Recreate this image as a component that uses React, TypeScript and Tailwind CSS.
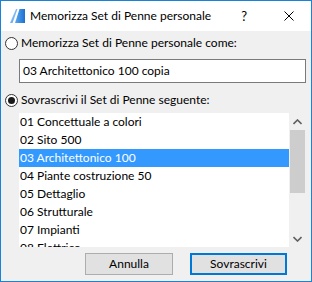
import React from 'react';

const items = [
  '01 Concettuale a colori',
  '02 Sito 500',
  '03 Architettonico 100',
  '04 Piante costruzione 50',
  '05 Dettaglio',
  '06 Strutturale',
  '07 Impianti',
  '08 Elettrico',
];

function Radio({ checked }: { checked?: boolean }) {
  return (
    <div className="flex h-[13px] w-[13px] items-center justify-center rounded-full border border-[#333333] bg-white">
      {checked && <div className="h-[7px] w-[7px] rounded-full bg-[#1a1a1a]" />}
    </div>
  );
}

function AppIcon() {
  return (
    <svg width="16" height="16" viewBox="0 0 16 16">
      <defs>
        <linearGradient id="ga" x1="0" y1="0" x2="1" y2="1">
          <stop offset="0" stopColor="#bfe0ff" />
          <stop offset="1" stopColor="#3d8ee6" />
        </linearGradient>
        <linearGradient id="gb" x1="0" y1="0" x2="1" y2="0">
          <stop offset="0" stopColor="#5aa8f0" />
          <stop offset="1" stopColor="#1c6fd0" />
        </linearGradient>
      </defs>
      <path d="M0 15 L6 1 L7.5 1 L2.5 15 Z" fill="url(#ga)" />
      <path d="M5 15 L9.5 1 L15 1 L15 15 Z" fill="url(#gb)" />
    </svg>
  );
}

export default function App() {
  return (
    <div
      className="flex h-[282px] w-[312px] flex-col border border-[#1883d7] bg-[#f0f0f0] text-[12px] text-black"
      style={{ fontFamily: 'Lato, "Liberation Sans", sans-serif' }}
    >
      <div className="flex h-[30px] items-center bg-white">
        <div className="ml-[9px] mr-[4px] flex">
          <AppIcon />
        </div>
        <span className="leading-none">Memorizza Set di Penne personale</span>
        <span className="ml-auto mr-[37px] text-[13px] leading-none">?</span>
        <svg className="mr-[17px]" width="10" height="10" viewBox="0 0 10 10">
          <path d="M0.5 0.5 L9.5 9.5 M9.5 0.5 L0.5 9.5" stroke="#000" strokeWidth="1" />
        </svg>
      </div>

      <div className="flex flex-1 flex-col">
        <div className="ml-[4px] mt-[5px] flex h-[14px] items-center gap-[3px]">
          <Radio />
          <span className="leading-none">Memorizza Set di Penne personale come:</span>
        </div>

        <div className="ml-[18px] mr-[5px] mt-[9px] flex h-[24px] items-center border border-[#7a7a7a] bg-white pl-[3px]">
          03 Architettonico 100 copia
        </div>

        <div className="ml-[4px] mt-[10px] flex h-[14px] items-center gap-[3px]">
          <Radio checked />
          <span className="leading-none">Sovrascrivi il Set di Penne seguente:</span>
        </div>

        <div className="ml-[18px] mr-[5px] mt-[6px] flex h-[134px]">
          <div className="flex-1 overflow-hidden bg-white">
            {items.map((it, i) => (
              <div
                key={it}
                className={`flex h-[18px] items-center pl-[1px] ${
                  i === 2 ? 'bg-[#3399ff] text-white' : ''
                }`}
              >
                {it}
              </div>
            ))}
          </div>
          <div className="flex w-[17px] flex-col items-center bg-[#f0f0f0]">
            <div className="flex h-[17px] items-center justify-center">
              <svg width="9" height="6" viewBox="0 0 9 6">
                <path d="M0.5 5 L4.5 1 L8.5 5" stroke="#606060" strokeWidth="1.6" fill="none" />
              </svg>
            </div>
            <div className="h-[63px] w-[15px] bg-[#cdcdcd]" />
            <div className="flex-1" />
            <div className="flex h-[17px] items-center justify-center">
              <svg width="9" height="6" viewBox="0 0 9 6">
                <path d="M0.5 1 L4.5 5 L8.5 1" stroke="#606060" strokeWidth="1.6" fill="none" />
              </svg>
            </div>
          </div>
        </div>

        <div className="mt-[6px] flex justify-end gap-[17px] pr-[24px]">
          <button className="flex h-[22px] w-[88px] items-center justify-center border border-[#adadad] bg-[#e1e1e1]">
            Annulla
          </button>
          <button className="flex h-[22px] w-[97px] items-center justify-center border-2 border-[#0078d7] bg-[#e1e1e1]">
            Sovrascrivi
          </button>
        </div>
      </div>
    </div>
  );
}
